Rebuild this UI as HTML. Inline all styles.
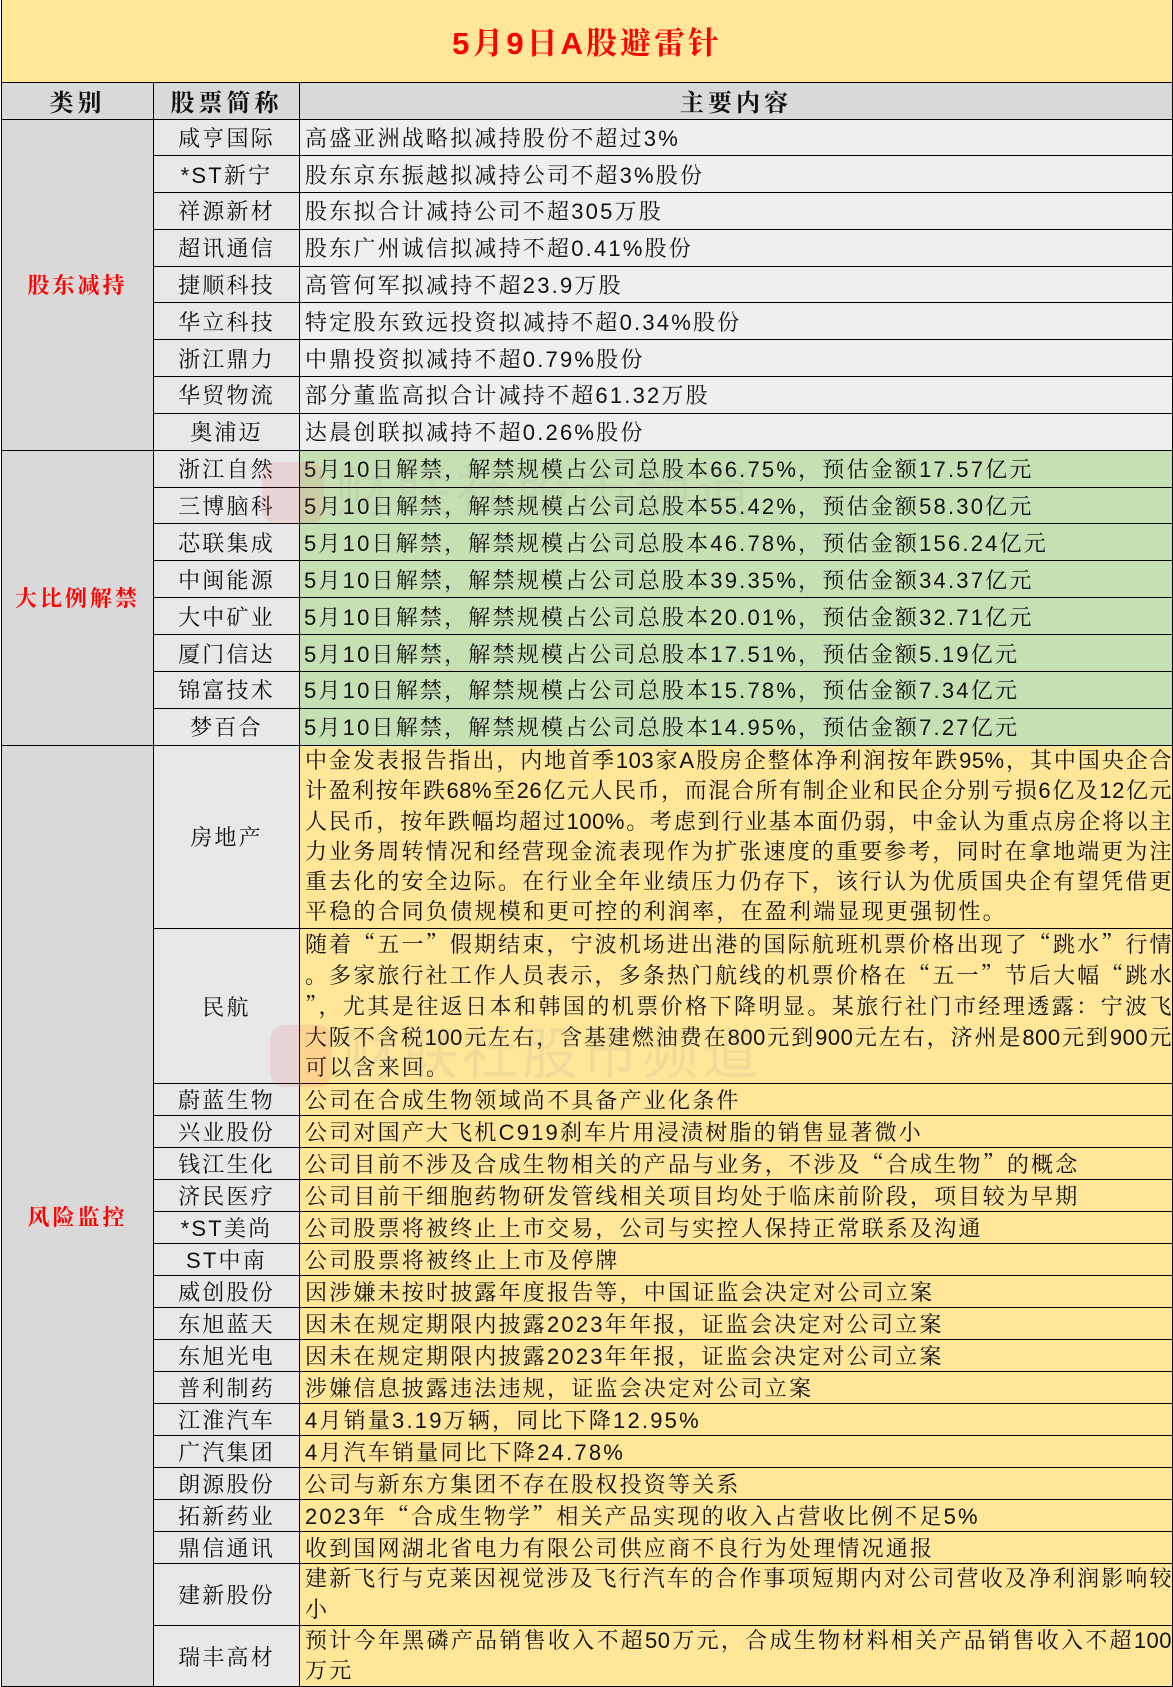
<!DOCTYPE html>
<html><head><meta charset="utf-8"><style>
*{margin:0;padding:0;box-sizing:border-box}
body{width:1173px;height:1649px;background:#fff;position:relative;overflow:hidden;font-family:"Liberation Sans","Noto Serif CJK SC",serif;color:#111}
table{position:absolute;left:1px;top:0;width:1171px;border-collapse:collapse;table-layout:fixed}
td{border:1.5px solid #000;font-size:22px;letter-spacing:2.2px;white-space:nowrap;overflow:hidden;vertical-align:middle}
.t{background:#ffe699;color:#f00;font-weight:bold;font-size:31px;text-align:center;letter-spacing:3px;border-top:none}
.h{background:#d9d9d9;font-weight:bold;font-size:24px;text-align:center;letter-spacing:4px}
.c{background:#d9d9d9;color:#f00;font-weight:bold;font-size:22px;text-align:center;letter-spacing:3px}
.n{background:#e8e8e8;text-align:center}
.g{background:#efefef;padding-left:5px}
.u{background:#c6e0b4;padding-left:4px}
.y{background:#ffe699;padding-left:5px}
.p div{text-align:justify;text-align-last:justify;line-height:30.3px;letter-spacing:0.5px}
.p div.l{text-align-last:left;letter-spacing:2.2px}
.q{font-family:"Noto Serif CJK SC",serif}
.wm{position:absolute;font-size:56px;color:rgba(150,150,150,.13);letter-spacing:4px;font-family:"Noto Sans CJK SC",sans-serif;white-space:nowrap}
.wi{position:absolute;width:62px;height:62px;border-radius:14px;background:rgba(230,80,80,.13)}
</style></head><body>
<table>
<colgroup><col style="width:152px"><col style="width:146px"><col style="width:873px"></colgroup>
<tr style="height:82px"><td colspan="3" class="t">5月9日A股避雷针</td></tr>
<tr style="height:37px"><td class="h">类别</td><td class="h">股票简称</td><td class="h">主要内容</td></tr>
<tr style="height:36.8px"><td class="c" rowspan="9">股东减持</td><td class="n">咸亨国际</td><td class="g">高盛亚洲战略拟减持股份不超过3%</td></tr>
<tr style="height:36.8px"><td class="n">*ST新宁</td><td class="g">股东京东振越拟减持公司不超3%股份</td></tr>
<tr style="height:36.8px"><td class="n">祥源新材</td><td class="g">股东拟合计减持公司不超305万股</td></tr>
<tr style="height:36.8px"><td class="n">超讯通信</td><td class="g">股东广州诚信拟减持不超0.41%股份</td></tr>
<tr style="height:36.8px"><td class="n">捷顺科技</td><td class="g">高管何军拟减持不超23.9万股</td></tr>
<tr style="height:36.8px"><td class="n">华立科技</td><td class="g">特定股东致远投资拟减持不超0.34%股份</td></tr>
<tr style="height:36.8px"><td class="n">浙江鼎力</td><td class="g">中鼎投资拟减持不超0.79%股份</td></tr>
<tr style="height:36.8px"><td class="n">华贸物流</td><td class="g">部分董监高拟合计减持不超61.32万股</td></tr>
<tr style="height:36.8px"><td class="n">奥浦迈</td><td class="g">达晨创联拟减持不超0.26%股份</td></tr>
<tr style="height:36.9px"><td class="c" rowspan="8">大比例解禁</td><td class="n">浙江自然</td><td class="u">5月10日解禁，解禁规模占公司总股本66.75%，预估金额17.57亿元</td></tr>
<tr style="height:36.9px"><td class="n">三博脑科</td><td class="u">5月10日解禁，解禁规模占公司总股本55.42%，预估金额58.30亿元</td></tr>
<tr style="height:36.9px"><td class="n">芯联集成</td><td class="u">5月10日解禁，解禁规模占公司总股本46.78%，预估金额156.24亿元</td></tr>
<tr style="height:36.9px"><td class="n">中闽能源</td><td class="u">5月10日解禁，解禁规模占公司总股本39.35%，预估金额34.37亿元</td></tr>
<tr style="height:36.9px"><td class="n">大中矿业</td><td class="u">5月10日解禁，解禁规模占公司总股本20.01%，预估金额32.71亿元</td></tr>
<tr style="height:36.9px"><td class="n">厦门信达</td><td class="u">5月10日解禁，解禁规模占公司总股本17.51%，预估金额5.19亿元</td></tr>
<tr style="height:36.9px"><td class="n">锦富技术</td><td class="u">5月10日解禁，解禁规模占公司总股本15.78%，预估金额7.34亿元</td></tr>
<tr style="height:36.9px"><td class="n">梦百合</td><td class="u">5月10日解禁，解禁规模占公司总股本14.95%，预估金额7.27亿元</td></tr>
<tr style="height:183px"><td class="c" rowspan="19">风险监控</td><td class="n">房地产</td><td class="y p">
<div>中金发表报告指出，内地首季103家A股房企整体净利润按年跌95%，其中国央企合</div>
<div>计盈利按年跌68%至26亿元人民币，而混合所有制企业和民企分别亏损6亿及12亿元</div>
<div>人民币，按年跌幅均超过100%。考虑到行业基本面仍弱，中金认为重点房企将以主</div>
<div>力业务周转情况和经营现金流表现作为扩张速度的重要参考，同时在拿地端更为注</div>
<div>重去化的安全边际。在行业全年业绩压力仍存下，该行认为优质国央企有望凭借更</div>
<div class="l">平稳的合同负债规模和更可控的利润率，在盈利端显现更强韧性。</div></td></tr>
<tr style="height:149px"><td class="n">民航</td><td class="y p">
<div>随着<span class="q">“</span>五一<span class="q">”</span>假期结束，宁波机场进出港的国际航班机票价格出现了<span class="q">“</span>跳水<span class="q">”</span>行情</div>
<div>。多家旅行社工作人员表示，多条热门航线的机票价格在<span class="q">“</span>五一<span class="q">”</span>节后大幅<span class="q">“</span>跳水</div>
<div><span class="q">”</span>，尤其是往返日本和韩国的机票价格下降明显。某旅行社门市经理透露：宁波飞</div>
<div>大阪不含税100元左右，含基建燃油费在800元到900元左右，济州是800元到900元</div>
<div class="l">可以含来回。</div></td></tr>
<tr style="height:30.27px"><td class="n">蔚蓝生物</td><td class="y">公司在合成生物领域尚不具备产业化条件</td></tr>
<tr style="height:30.27px"><td class="n">兴业股份</td><td class="y">公司对国产大飞机C919刹车片用浸渍树脂的销售显著微小</td></tr>
<tr style="height:30.27px"><td class="n">钱江生化</td><td class="y">公司目前不涉及合成生物相关的产品与业务，不涉及<span class="q">“</span>合成生物<span class="q">”</span>的概念</td></tr>
<tr style="height:30.27px"><td class="n">济民医疗</td><td class="y">公司目前干细胞药物研发管线相关项目均处于临床前阶段，项目较为早期</td></tr>
<tr style="height:30.27px"><td class="n">*ST美尚</td><td class="y">公司股票将被终止上市交易，公司与实控人保持正常联系及沟通</td></tr>
<tr style="height:30.27px"><td class="n">ST中南</td><td class="y">公司股票将被终止上市及停牌</td></tr>
<tr style="height:30.27px"><td class="n">威创股份</td><td class="y">因涉嫌未按时披露年度报告等，中国证监会决定对公司立案</td></tr>
<tr style="height:30.27px"><td class="n">东旭蓝天</td><td class="y">因未在规定期限内披露2023年年报，证监会决定对公司立案</td></tr>
<tr style="height:30.27px"><td class="n">东旭光电</td><td class="y">因未在规定期限内披露2023年年报，证监会决定对公司立案</td></tr>
<tr style="height:30.27px"><td class="n">普利制药</td><td class="y">涉嫌信息披露违法违规，证监会决定对公司立案</td></tr>
<tr style="height:30.27px"><td class="n">江淮汽车</td><td class="y">4月销量3.19万辆，同比下降12.95%</td></tr>
<tr style="height:30.27px"><td class="n">广汽集团</td><td class="y">4月汽车销量同比下降24.78%</td></tr>
<tr style="height:30.27px"><td class="n">朗源股份</td><td class="y">公司与新东方集团不存在股权投资等关系</td></tr>
<tr style="height:30.27px"><td class="n">拓新药业</td><td class="y">2023年<span class="q">“</span>合成生物学<span class="q">”</span>相关产品实现的收入占营收比例不足5%</td></tr>
<tr style="height:30.27px"><td class="n">鼎信通讯</td><td class="y">收到国网湖北省电力有限公司供应商不良行为处理情况通报</td></tr>
<tr style="height:58px"><td class="n">建新股份</td><td class="y p">
<div>建新飞行与克莱因视觉涉及飞行汽车的合作事项短期内对公司营收及净利润影响较</div>
<div class="l">小</div></td></tr>
<tr style="height:59px"><td class="n">瑞丰高材</td><td class="y p">
<div>预计今年黑磷产品销售收入不超50万元，合成生物材料相关产品销售收入不超100</div>
<div class="l">万元</div></td></tr>
</table>
<div class="wi" style="left:262px;top:462px"></div>
<div class="wm" style="left:335px;top:448px">财联社股市频道</div>
<div class="wi" style="left:270px;top:1025px"></div>
<div class="wm" style="left:342px;top:1010px">财联社股市频道</div>
</body></html>
